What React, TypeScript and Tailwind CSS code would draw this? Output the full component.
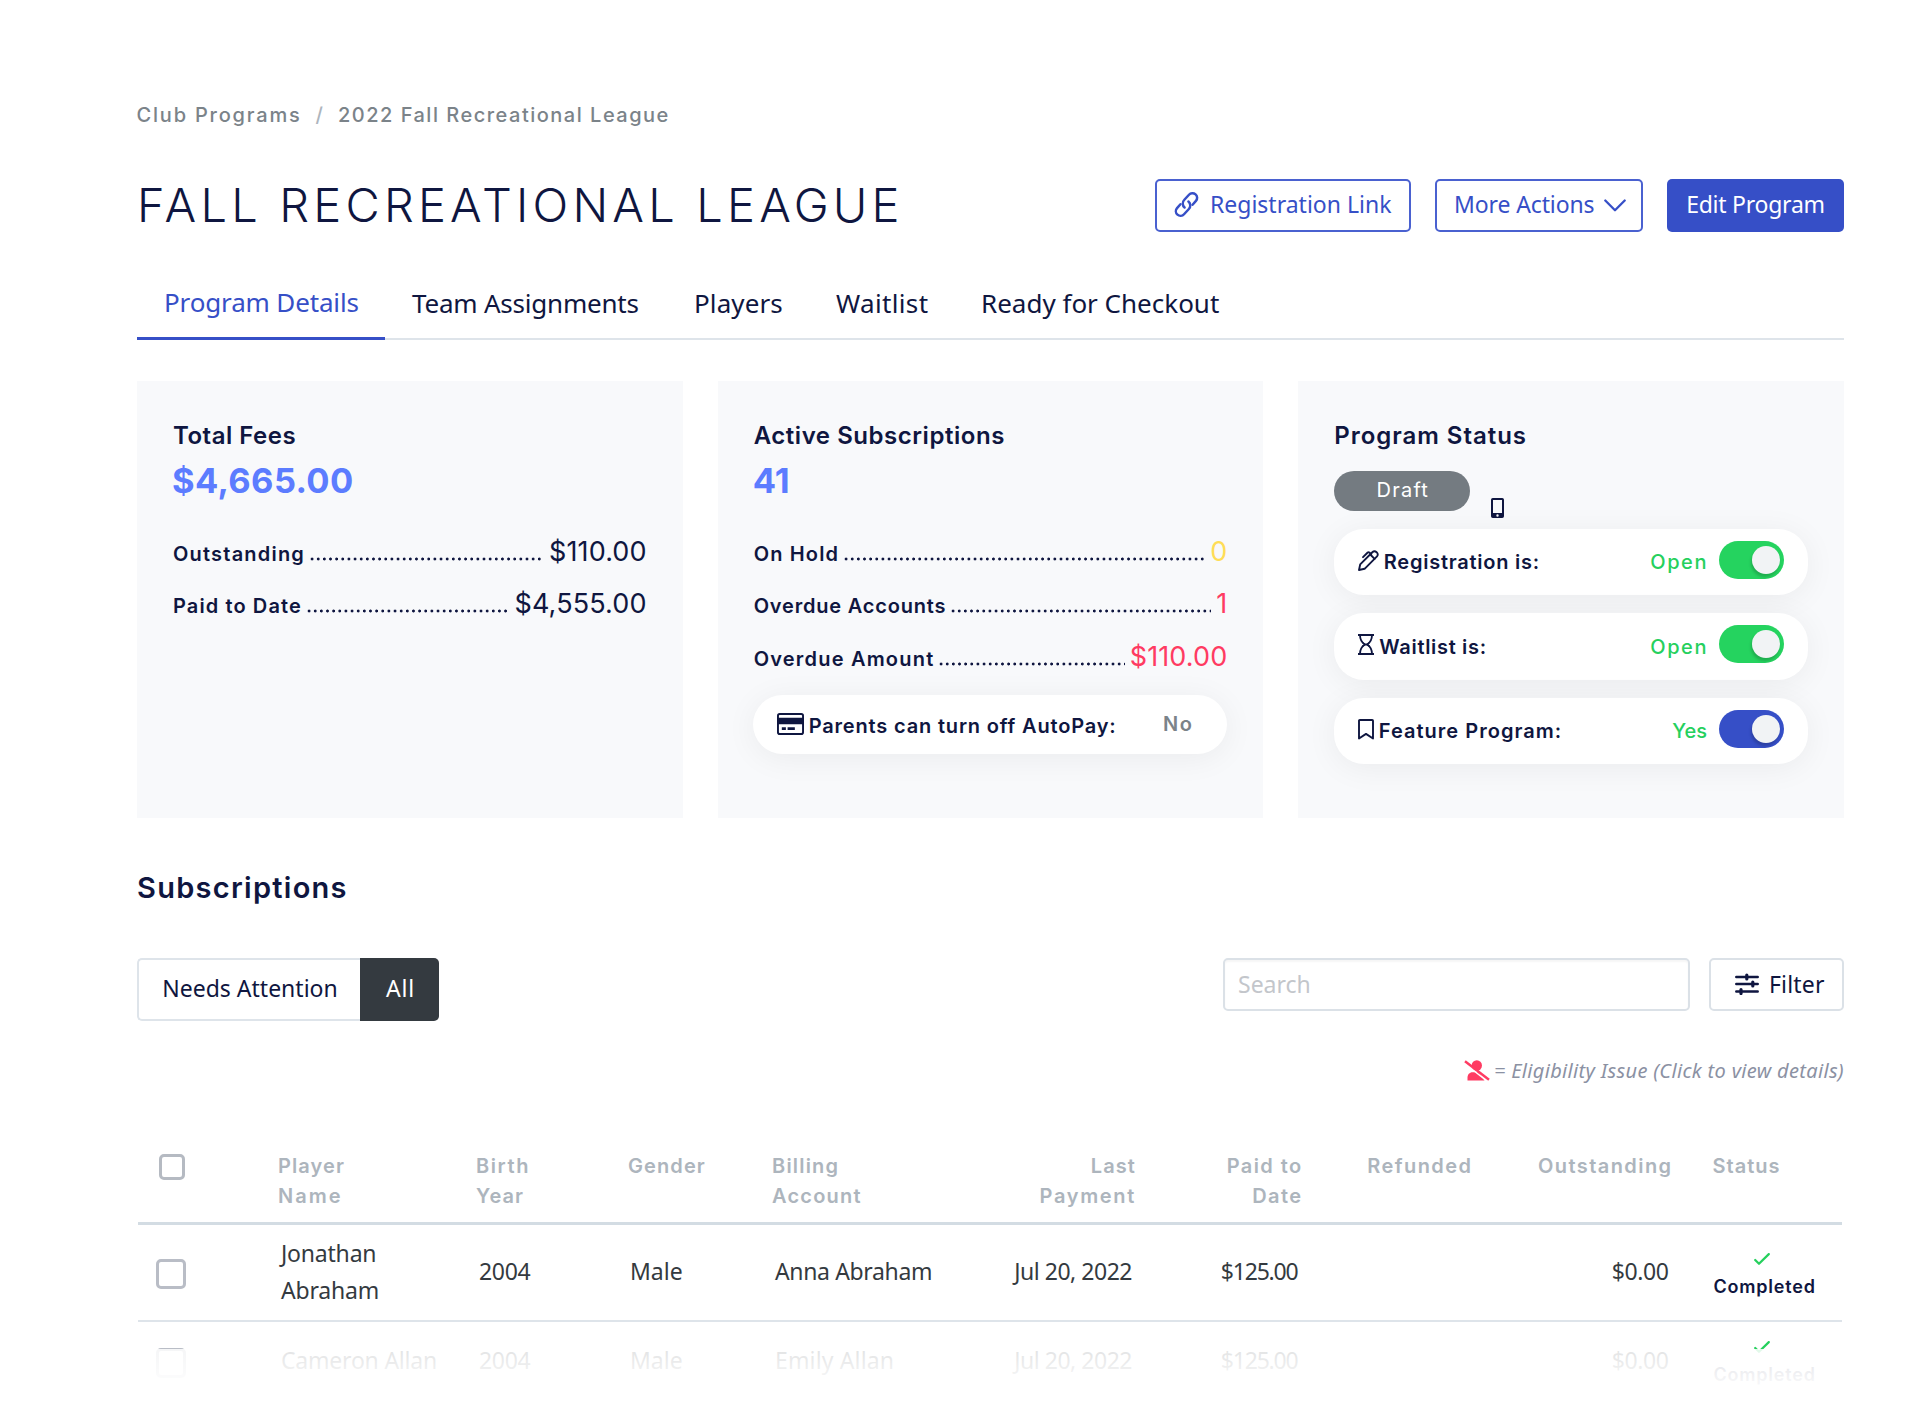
import type { ReactNode } from "react";

const HEAD = "font-['Inter',sans-serif]";
const BODY = "font-['Noto_Sans',sans-serif]";

function LinkIcon() {
  return (
    <svg className="h-[27px] w-[27px]" viewBox="0 0 24 24" fill="none" stroke="currentColor" strokeWidth="2.2" strokeLinecap="round" strokeLinejoin="round">
      <path d="M10.300 14.600a4.500 4.500 0 0 1-.4-6.600l4.300-4.700a4.100 4.100 0 0 1 6.200 5.500l-3 3.400" />
      <path d="M13.700 9.400a4.500 4.500 0 0 1 .4 6.600l-4.300 4.700a4.100 4.100 0 0 1-6.200-5.500l3-3.400" />
    </svg>
  );
}

function CardIcon() {
  return (
    <svg className="h-[22px] w-[27px]" viewBox="0 0 28 22" preserveAspectRatio="none">
      <rect x="1" y="1" width="26" height="20" rx="1.800" fill="none" stroke="currentColor" strokeWidth="2" />
      <path fill="currentColor" d="M1 4.800h26v6.400H1zM5 14.300h4.200v2.600H5zM11 14.300h7.500v2.600H11z" />
    </svg>
  );
}

function PhoneIcon() {
  return (
    <svg className="h-5 w-[13px]" viewBox="0 0 13 20">
      <path fill="currentColor" fillRule="evenodd" d="M1.800 0h9.400A1.800 1.800 0 0 1 13 1.800v16.400a1.800 1.800 0 0 1-1.800 1.800H1.800A1.800 1.800 0 0 1 0 18.200V1.800A1.800 1.800 0 0 1 1.800 0zM2 2v13h9V2zM6.500 16.300a1.200 1.200 0 1 0 0 2.400 1.200 1.200 0 0 0 0-2.400z" />
    </svg>
  );
}

function PenIcon() {
  return (
    <svg className="h-[21px] w-[21px]" viewBox="0 0 21 21" fill="none" stroke="currentColor" strokeWidth="1.900" strokeLinejoin="round" strokeLinecap="round">
      <path d="M1 20l1.200-5.600L14.600 2a2.600 2.600 0 0 1 3.700 0l.7.700a2.600 2.600 0 0 1 0 3.700L6.600 18.800 1 20z" />
      <path d="M12.300 4.500l4.300 4.300M5 7.200l4.700-4.700a1.200 1.200 0 0 1 1.600 0l1.900 1.700" />
    </svg>
  );
}

function HourglassIcon() {
  return (
    <svg className="h-[21px] w-4" viewBox="0 0 16 21" fill="none" stroke="currentColor" strokeWidth="1.800" strokeLinejoin="round">
      <path d="M0 1h16M0 20h16M2 1c0 5.500 2 7.700 5 9.500C4 12.300 2 14.500 2 20M14 1c0 5.500-2 7.700-5 9.500 3 1.800 5 4 5 9.500" />
      <path d="M4.500 8.500C6.500 11 9.500 11 11.500 8.500M4.500 12.500C6.500 10 9.500 10 11.500 12.500" strokeWidth="1.400" />
    </svg>
  );
}

function BookmarkIcon() {
  return (
    <svg className="h-[21px] w-4" viewBox="0 0 16 21" fill="none" stroke="currentColor" strokeWidth="1.900" strokeLinejoin="round">
      <path d="M1 1.800A.8.800 0 0 1 1.800 1h12.400a.8.800 0 0 1 .8.800V19.500l-7-4.600-7 4.600z" />
    </svg>
  );
}

function SlidersIcon() {
  return (
    <svg className="h-[22px] w-6" viewBox="0 0 24 22" fill="none" stroke="currentColor" strokeWidth="2.500" strokeLinecap="round">
      <path d="M1.300 4h21.400M1.300 11h21.400M1.300 18.500h21.400" />
      <path d="M11.800 2v4M17.800 9v4M6 16.500v4" strokeWidth="3.200" />
    </svg>
  );
}

function UserSlashIcon() {
  return (
    <svg className="h-[21px] w-[26px]" viewBox="0 0 26 21">
      <circle cx="12.800" cy="5.500" r="5.200" fill="currentColor" />
      <path fill="currentColor" d="M3.500 20.500v-3c0-3 2-5.300 5-5.300h6l6 8.300z" />
      <path d="M-1.500 1.800l24 18.800" stroke="#fff" strokeWidth="1.500" />
      <path d="M1 1.200l24 18.600" stroke="currentColor" strokeWidth="2.400" />
    </svg>
  );
}

function Leader({ label, value, labelClass, valueClass }: { label: string; value: string; labelClass: string; valueClass: string }) {
  return (
    <div className="flex h-[52.5px] items-baseline">
      <span className={`${HEAD} text-[20px] font-semibold ${labelClass}`}>{label}</span>
      <span className="mr-[5px] ml-[4px] h-[4px] flex-1 bg-[radial-gradient(circle_at_center,#0f1640_1.200px,transparent_1.800px)] bg-[length:6.15px_4px]" />
      <span className={`${HEAD} text-[27px] leading-[52.5px] ${valueClass}`}>{value}</span>
    </div>
  );
}

function Toggle({ color }: { color: string }) {
  return (
    <span className={`mb-1 flex h-[38px] w-[65px] items-center justify-end rounded-full pr-1 ${color}`}>
      <span className="size-7 rounded-full bg-[#f1f3f5] shadow-[-1px_3px_3px_rgba(0,0,0,0.18)]" />
    </span>
  );
}

function StatusRow({ icon, label, labelClass, state, stateClass, toggle }: { icon: ReactNode; label: string; labelClass: string; state: string; stateClass: string; toggle: string }) {
  return (
    <div className="flex h-[66.5px] items-center rounded-[30px] bg-white pr-6 pl-6 shadow-[0_4px_32px_rgba(0,0,0,0.06)]">
      <span className="mb-[3px]">{icon}</span>
      <span className={`${HEAD} mt-px text-[20px] font-semibold ${labelClass}`}>{label}</span>
      <span className={`${HEAD} mt-px ml-auto text-[20px] font-medium text-[#25d05d] ${stateClass}`}>{state}</span>
      <Toggle color={toggle} />
    </div>
  );
}

const COLS = "grid grid-cols-[140px_198px_152px_144px_200px_163px_166.5px_170px_200px_1fr]";

function Row({ name, year, payer, payerClass, nameClass, height }: { name: ReactNode; year: string; payer: string; payerClass: string; nameClass: string; height: string }) {
  return (
    <div className={`${COLS} ${height} ${BODY} items-center pb-[2px] text-[23px] leading-[36.5px] text-[#343a40]`}>
      <span className="mt-[5px] ml-[18px] size-[30px] rounded-[5px] border-[3px] border-[#b9bdc6]" />
      <span className={`pl-[3px] whitespace-nowrap ${nameClass}`}>{name}</span>
      <span className="pl-[3px] tracking-[-0.32px]">{year}</span>
      <span className="pl-[2px]">Male</span>
      <span className={`pl-[3px] ${payerClass}`}>{payer}</span>
      <span className="pr-[3px] text-right tracking-[-0.48px]">Jul 20, 2022</span>
      <span className="pr-[4px] text-right tracking-[-1.2px]">$125.00</span>
      <span />
      <span className="pr-[3px] text-right tracking-[-0.4px]">$0.00</span>
      <span className="mt-[8px] flex flex-col items-start pl-[42px]">
        <svg className="ml-[40px] h-3 w-4" viewBox="0 0 16 12" fill="none" stroke="#25d05d" strokeWidth="2.200" strokeLinecap="round" strokeLinejoin="round">
          <path d="M1.200 7l3.800 3.800L14.800 1.100" />
        </svg>
        <span className={`${HEAD} mt-[10px] text-[18px] leading-6 font-semibold tracking-[0.8px] text-[#0f1640]`}>Completed</span>
      </span>
    </div>
  );
}

export default function App() {
  return (
    <div className={`relative h-[1413px] w-[1920px] overflow-hidden bg-white pt-[103px] pr-[76px] pl-[137px] text-[#0f1640] ${BODY}`}>
      <nav className={`${HEAD} flex h-6 items-center text-[20px] leading-6 font-medium text-[#7b8389]`}>
        <span className="-ml-[0.5px] tracking-[1.8px]">Club Programs</span>
        <span className="ml-[14px] text-[#adb5bd]">/</span>
        <span className="ml-[15px] tracking-[1.5px]">2022 Fall Recreational League</span>
      </nav>

      <header className="mt-[51px] flex h-[54px] items-center">
        <h1 className={`${HEAD} text-[47px] leading-[54px] font-light tracking-[4.2px] whitespace-nowrap`}>FALL RECREATIONAL LEAGUE</h1>
        <div className="ml-auto flex gap-[24px] text-[23px] text-[#364fc7]">
          <button className="flex h-[53px] w-[256px] items-center rounded-[5px] border-2 border-[#4a61d0] pb-[2px] pl-4">
            <LinkIcon />
            <span className="ml-[10px] whitespace-nowrap">Registration Link</span>
          </button>
          <button className="flex h-[53px] w-[208px] items-center rounded-[5px] border-2 border-[#4a61d0] pb-[2px] pl-[17px]">
            <span className="tracking-[-0.12px] whitespace-nowrap">More Actions</span>
            <svg className="mt-[2px] ml-[10px] h-[13px] w-[22px]" viewBox="0 0 22 13" fill="none" stroke="currentColor" strokeWidth="2.300" strokeLinecap="round" strokeLinejoin="round">
              <path d="M1.300 1.500L11 11.300l9.700-9.800" />
            </svg>
          </button>
          <button className="h-[53px] w-[177px] rounded-[5px] bg-[#364fc7] pb-[2px] tracking-[-0.25px] text-white">Edit Program</button>
        </div>
      </header>

      <div className="mt-7 flex h-20 border-b-2 border-[#dee4ea] text-[26px] leading-9 whitespace-nowrap">
        <span className="-mb-[2px] w-[248px] border-b-[3px] border-[#364fc7] pt-6 pl-[27px] tracking-[-0.15px] text-[#364fc7]">Program Details</span>
        <span className="w-[282px] pt-[25px] pl-[27px] tracking-[-0.21px]">Team Assignments</span>
        <span className="w-[142px] pt-[25px] pl-[27px] tracking-[0.1px]">Players</span>
        <span className="w-[144px] pt-[25px] pl-[27px] tracking-[0.35px]">Waitlist</span>
        <span className="pt-[25px] pl-[28px]">Ready for Checkout</span>
      </div>

      <section className="mt-[41px] grid h-[437px] grid-cols-3 gap-[35px]">
        <div className="bg-[#f8f9fb] px-9 pt-[39.500px]">
          <h2 className={`${HEAD} text-[24px] leading-[30px] font-semibold tracking-[0.5px]`}>Total Fees</h2>
          <p className={`${HEAD} mt-[9px] mb-6 -ml-px text-[34.5px] leading-[42px] font-bold tracking-[0.36px] text-[#5c7cff]`}>$4,665.00</p>
          <Leader label="Outstanding" value="$110.00" labelClass="tracking-[1.2px]" valueClass="tracking-[0.12px]" />
          <Leader label="Paid to Date" value="$4,555.00" labelClass="tracking-[1.1px]" valueClass="tracking-[0.14px]" />
        </div>

        <div className="bg-[#f8f9fb] px-9 pt-[39.500px]">
          <h2 className={`${HEAD} text-[24px] leading-[30px] font-semibold tracking-[0.54px]`}>Active Subscriptions</h2>
          <p className={`${HEAD} mt-[9px] mb-6 -ml-px text-[34.5px] leading-[42px] font-bold text-[#5c7cff]`}>41</p>
          <Leader label="On Hold" value="0" labelClass="tracking-[1.15px]" valueClass="text-[#ffdd57]" />
          <Leader label="Overdue Accounts" value="1" labelClass="tracking-[0.81px]" valueClass="text-[#ff3b62]" />
          <Leader label="Overdue Amount" value="$110.00" labelClass="tracking-[1.2px]" valueClass="tracking-[0.12px] text-[#ff3b62]" />
          <div className="mt-[11.500px] -ml-px flex h-[59px] items-center rounded-full bg-white pr-[34px] pl-6 shadow-[0_4px_32px_rgba(0,0,0,0.06)]">
            <CardIcon />
            <span className={`${HEAD} mt-[3px] ml-[5px] text-[20px] font-semibold tracking-[0.83px] whitespace-nowrap`}>Parents can turn off AutoPay:</span>
            <span className={`${HEAD} ml-auto text-[20px] font-semibold tracking-[1.5px] text-[#7b8389]`}>No</span>
          </div>
        </div>

        <div className="bg-[#f8f9fb] px-9 pt-[39.500px]">
          <h2 className={`${HEAD} text-[24px] leading-[30px] font-semibold tracking-[0.96px]`}>Program Status</h2>
          <div className="mt-[20px] mb-[18px] flex h-10">
            <span className={`${HEAD} h-10 w-[136px] rounded-full bg-[#747b81] pl-px text-center text-[20px] leading-[39px] tracking-[1.2px] text-white`}>Draft</span>
            <span className="mt-[27px] ml-[21px] h-5">
              <PhoneIcon />
            </span>
          </div>
          <div className="flex flex-col gap-[18px]">
            <StatusRow icon={<PenIcon />} label="Registration is:" labelClass="ml-[4.500px] tracking-[0.75px]" state="Open" stateClass="mr-[11px] tracking-[1.57px]" toggle="bg-[#25d35f]" />
            <StatusRow icon={<HourglassIcon />} label="Waitlist is:" labelClass="ml-[5px] tracking-[0.68px]" state="Open" stateClass="mr-[11px] tracking-[1.57px]" toggle="bg-[#25d35f]" />
            <StatusRow icon={<BookmarkIcon />} label="Feature Program:" labelClass="ml-[4.500px] tracking-[1.02px]" state="Yes" stateClass="mr-[12px]" toggle="bg-[#364fc7]" />
          </div>
        </div>
      </section>

      <h2 className={`${HEAD} mt-[52px] text-[29px] leading-9 font-semibold tracking-[1.28px]`}>Subscriptions</h2>

      <div className="mt-[52px] flex h-[63px] items-start text-[23px]">
        <button className="h-[63px] w-[223px] rounded-l-[5px] border-2 border-r-0 border-[#dee4ea] pb-[2px] pl-px">Needs Attention</button>
        <button className="h-[63px] w-[79px] rounded-r-[5px] bg-[#343a40] pb-[2px] pl-[2px] tracking-[0.8px] text-white">All</button>
        <input
          className="ml-auto h-[53px] w-[467px] rounded-[5px] border-2 border-[#dbe1e7] pb-px pl-[13px] shadow-[inset_0_2px_2px_rgba(0,0,0,0.04)] placeholder:text-[#c3c6cb]"
          placeholder="Search"
        />
        <button className="ml-[19px] flex h-[53px] w-[135px] items-center rounded-[5px] border-2 border-[#dbe1e7] pb-px pl-[24px]">
          <SlidersIcon />
          <span className="ml-[10px] tracking-[0.18px]">Filter</span>
        </button>
      </div>

      <div className="mt-[36px] flex h-7 items-center justify-end text-[20px] leading-7 text-[#8b91a3] italic">
        <span className="mb-[2px] text-[#ff3b62]">
          <UserSlashIcon />
        </span>
        <span className="ml-[4px] tracking-[0.33px] whitespace-nowrap">= Eligibility Issue (Click to view details)</span>
      </div>

      <div className="mt-[66px] mr-[2px] ml-px">
        <div className={`${COLS} ${HEAD} h-[74px] border-b-[3px] border-[#d3dce3] text-[20px] leading-[30px] font-semibold tracking-[1.1px] whitespace-nowrap text-[#adb5bd]`}>
          <span className="mt-[3px] ml-[21px] size-[26px] rounded-[5px] border-[3px] border-[#b5bac2]" />
          <span>Player<br /><span className="tracking-[2px]">Name</span></span>
          <span className="tracking-[1.6px]">Birth<br /><span className="tracking-[1.1px]">Year</span></span>
          <span>Gender</span>
          <span className="tracking-[1.2px]">Billing<br />Account</span>
          <span className="-mr-[1px] text-right">Last<br /><span className="tracking-[1.67px]">Payment</span></span>
          <span className="-mr-[1px] text-right tracking-[1.4px]">Paid to<br />Date</span>
          <span className="-mr-[1px] text-right tracking-[1.45px]">Refunded</span>
          <span className="-mr-[1px] text-right tracking-[1.42px]">Outstanding</span>
          <span className="pl-[41px] tracking-[1px]">Status</span>
        </div>
        <div className="border-b-2 border-[#dee4ea]">
          <Row name={<>Jonathan<br />Abraham</>} year="2004" payer="Anna Abraham" height="h-[95px]" nameClass="tracking-[-0.2px]" payerClass="tracking-[-0.36px]" />
        </div>
        <Row name="Cameron Allan" year="2004" payer="Emily Allan" height="h-[78px]" nameClass="tracking-[-0.21px]" payerClass="tracking-[0.15px]" />
      </div>

      <div className="pointer-events-none absolute inset-x-0 bottom-0 h-[64px] bg-linear-to-b from-white/86 via-white/96 to-white" />
    </div>
  );
}
